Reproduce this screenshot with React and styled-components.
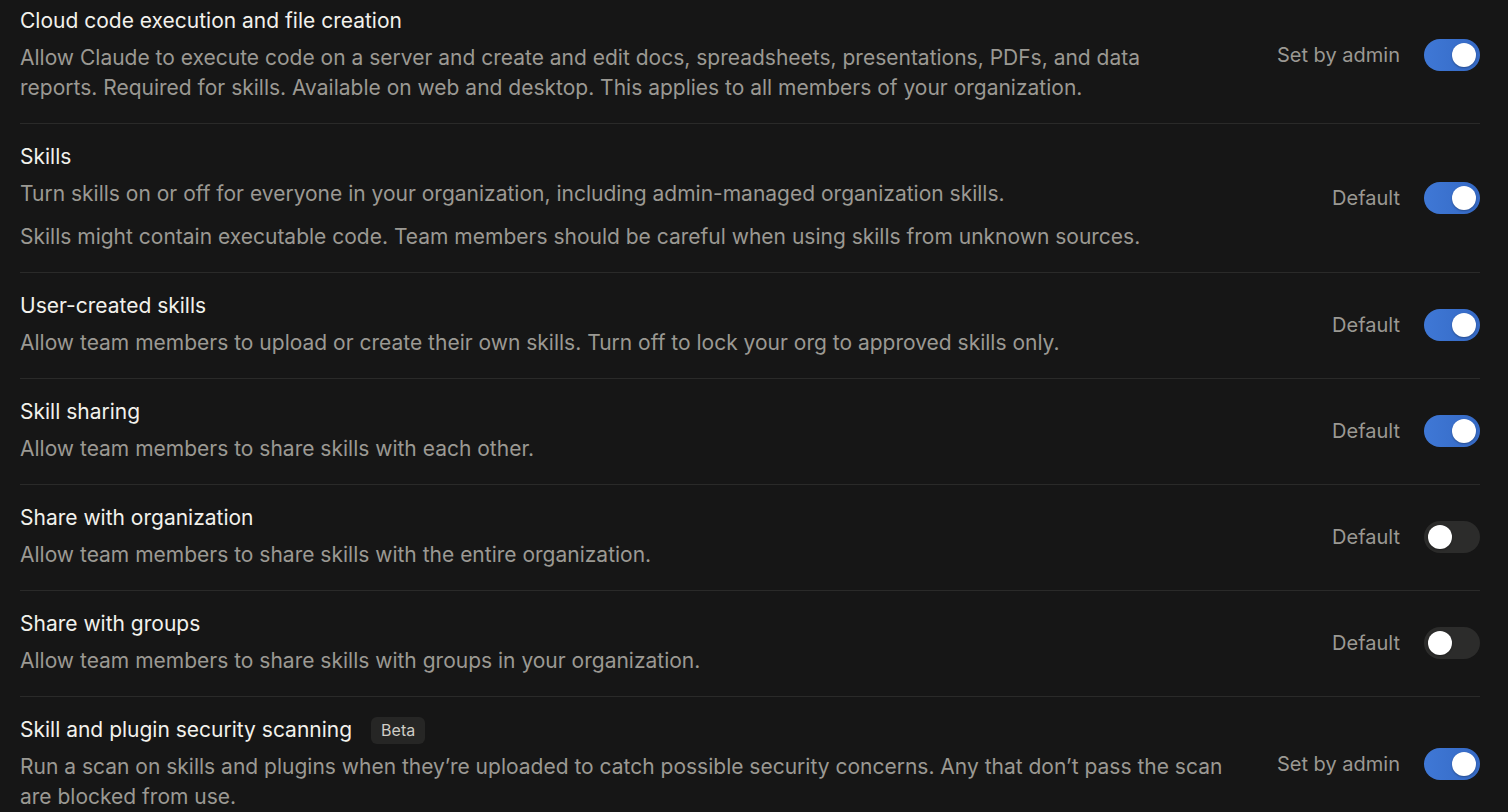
import React from 'react'
import styled, { createGlobalStyle } from 'styled-components'

const GlobalStyle = createGlobalStyle`
  html, body {
    margin: 0;
    padding: 0;
    background: #161616;
  }
  body {
    font-family: Inter, 'Noto Sans', sans-serif;
    -webkit-font-smoothing: antialiased;
  }
`

const settings = [
  {
    title: 'Cloud code execution and file creation',
    desc: [
      'Allow Claude to execute code on a server and create and edit docs, spreadsheets, presentations, PDFs, and data\nreports. Required for skills. Available on web and desktop. This applies to all members of your organization.',
    ],
    label: 'Set by admin',
    on: true,
  },
  {
    title: 'Skills',
    desc: [
      'Turn skills on or off for everyone in your organization, including admin-managed organization skills.',
      'Skills might contain executable code. Team members should be careful when using skills from unknown sources.',
    ],
    label: 'Default',
    on: true,
  },
  {
    title: 'User-created skills',
    desc: [
      'Allow team members to upload or create their own skills. Turn off to lock your org to approved skills only.',
    ],
    label: 'Default',
    on: true,
  },
  {
    title: 'Skill sharing',
    desc: ['Allow team members to share skills with each other.'],
    label: 'Default',
    on: true,
  },
  {
    title: 'Share with organization',
    desc: ['Allow team members to share skills with the entire organization.'],
    label: 'Default',
    on: false,
  },
  {
    title: 'Share with groups',
    desc: ['Allow team members to share skills with groups in your organization.'],
    label: 'Default',
    on: false,
  },
  {
    title: 'Skill and plugin security scanning',
    badge: 'Beta',
    desc: [
      'Run a scan on skills and plugins when they\u2019re uploaded to catch possible security concerns. Any that don\u2019t pass the scan are blocked from use.',
    ],
    label: 'Set by admin',
    on: true,
  },
]

const App = () => {
  return (
    <>
      <GlobalStyle />
      <Page>
        {settings.map((s, i) => (
          <Row key={i}>
            <Info>
              <Title>
                {s.title}
                {s.badge ? <Badge>{s.badge}</Badge> : null}
              </Title>
              {s.desc.map((d, j) => (
                <Desc key={j}>{d}</Desc>
              ))}
            </Info>
            <Control>
              <Label>{s.label}</Label>
              <Toggle $on={s.on}>
                <Knob />
              </Toggle>
            </Control>
          </Row>
        ))}
      </Page>
    </>
  )
}

const Page = styled.div`
  padding: 0 28px 0 20px;
`
const Row = styled.div`
  display: flex;
  align-items: center;
  gap: 40px;
  padding: 19px 0 20px;
  border-bottom: 1px solid #2a2a29;

  &:first-child {
    padding-top: 7px;
  }
`
const Info = styled.div`
  flex: 1;
  max-width: 1210px;
`
const Title = styled.div`
  display: flex;
  align-items: center;
  gap: 19px;
  color: #f2f1ec;
  font-size: 21px;
  line-height: 28px;
`
const Badge = styled.span`
  background: #262625;
  color: #cfcdc6;
  font-size: 16px;
  line-height: 21px;
  padding: 3px 10px;
  border-radius: 6px;
`
const Desc = styled.p`
  margin: 8px 0 0;
  color: #9b9993;
  font-size: 21px;
  line-height: 30px;
  white-space: pre-line;

  & + & {
    margin-top: 13px;
  }
`
const Control = styled.div`
  margin-left: auto;
  display: flex;
  align-items: center;
  gap: 24px;
`
const Label = styled.span`
  color: #9b9993;
  font-size: 20px;
  white-space: nowrap;
`
const Toggle = styled.div`
  width: 56px;
  height: 32px;
  border-radius: 16px;
  box-sizing: border-box;
  padding: 4px;
  display: flex;
  background: ${(p) =>
    p.$on ? 'linear-gradient(90deg, #3f78d6, #3569c4)' : '#2c2c2b'};
  justify-content: ${(p) => (p.$on ? 'flex-end' : 'flex-start')};
`
const Knob = styled.div`
  width: 24px;
  height: 24px;
  border-radius: 50%;
  background: #ffffff;
  box-shadow: 0 1px 2px rgba(0, 0, 0, 0.3);
`

export default App
